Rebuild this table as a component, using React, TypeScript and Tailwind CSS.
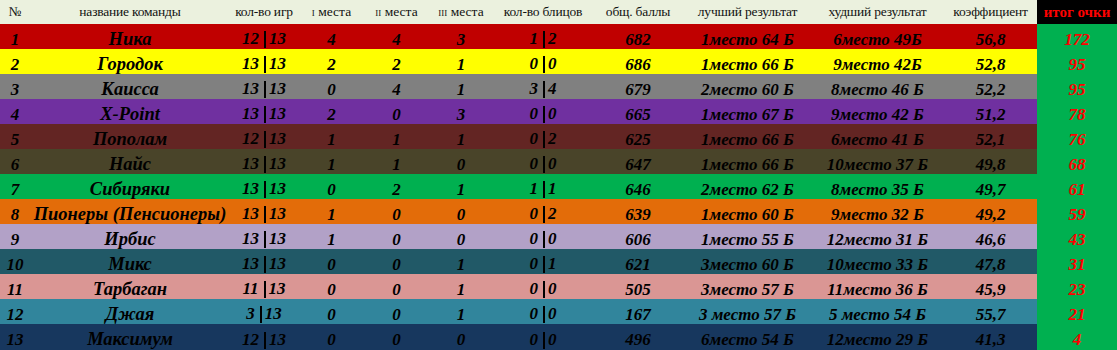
import React from "react";

type Row = {
  n: string;
  name: string;
  games: string;
  p1: string;
  p2: string;
  p3: string;
  blitz: string;
  total: string;
  best: string;
  worst: string;
  coef: string;
  score: string;
  bg: string;
};

const rows: Row[] = [
  { n: "1", name: "Ника", games: "12|13", p1: "4", p2: "4", p3: "3", blitz: "1|2", total: "682", best: "1место 64 Б", worst: "6место 49Б", coef: "56,8", score: "172", bg: "bg-[#c00000]" },
  { n: "2", name: "Городок", games: "13|13", p1: "2", p2: "2", p3: "1", blitz: "0|0", total: "686", best: "1место 66 Б", worst: "9место 42Б", coef: "52,8", score: "95", bg: "bg-[#ffff00]" },
  { n: "3", name: "Каисса", games: "13|13", p1: "0", p2: "4", p3: "1", blitz: "3|4", total: "679", best: "2место 60 Б", worst: "8место 46 Б", coef: "52,2", score: "95", bg: "bg-[#808080]" },
  { n: "4", name: "X-Point", games: "13|13", p1: "2", p2: "0", p3: "3", blitz: "0|0", total: "665", best: "1место 67 Б", worst: "9место 42 Б", coef: "51,2", score: "78", bg: "bg-[#7030a0]" },
  { n: "5", name: "Пополам", games: "12|13", p1: "1", p2: "1", p3: "1", blitz: "0|2", total: "625", best: "1место 66 Б", worst: "6место 41 Б", coef: "52,1", score: "76", bg: "bg-[#632523]" },
  { n: "6", name: "Найс", games: "13|13", p1: "1", p2: "1", p3: "0", blitz: "0|0", total: "647", best: "1место 66 Б", worst: "10место 37 Б", coef: "49,8", score: "68", bg: "bg-[#494429]" },
  { n: "7", name: "Сибиряки", games: "13|13", p1: "0", p2: "2", p3: "1", blitz: "1|1", total: "646", best: "2место 62 Б", worst: "8место 35 Б", coef: "49,7", score: "61", bg: "bg-[#00b050]" },
  { n: "8", name: "Пионеры (Пенсионеры)", games: "13|13", p1: "1", p2: "0", p3: "0", blitz: "0|2", total: "639", best: "1место 60 Б", worst: "9место 32 Б", coef: "49,2", score: "59", bg: "bg-[#e36c09]" },
  { n: "9", name: "Ирбис", games: "13|13", p1: "1", p2: "0", p3: "0", blitz: "0|0", total: "606", best: "1место 55 Б", worst: "12место 31 Б", coef: "46,6", score: "43", bg: "bg-[#b2a1c7]" },
  { n: "10", name: "Микс", games: "13|13", p1: "0", p2: "0", p3: "1", blitz: "0|1", total: "621", best: "3место 60 Б", worst: "10место 33 Б", coef: "47,8", score: "31", bg: "bg-[#215967]" },
  { n: "11", name: "Тарбаган", games: "11|13", p1: "0", p2: "0", p3: "1", blitz: "0|0", total: "505", best: "3место 57 Б", worst: "11место 36 Б", coef: "45,9", score: "23", bg: "bg-[#da9694]" },
  { n: "12", name: "Джая", games: "3|13", p1: "0", p2: "0", p3: "1", blitz: "0|0", total: "167", best: "3 место 57 Б", worst: "5 место 54 Б", coef: "55,7", score: "21", bg: "bg-[#31859c]" },
  { n: "13", name: "Максимум", games: "12|13", p1: "0", p2: "0", p3: "0", blitz: "0|0", total: "496", best: "6место 54 Б", worst: "12место 29 Б", coef: "41,3", score: "4", bg: "bg-[#17375e]" },
];

const grid =
  "grid grid-cols-[30px_200px_68px_67px_63px_66px_98px_92px_127px_133px_93px_80px]";

const cell = "flex items-center justify-center whitespace-nowrap pt-[5px]";

function Split({ v }: { v: string }) {
  const [a, b] = v.split("|");
  return (
    <span className="whitespace-pre">
      {a}
      <span className="inline-block w-[2px] h-[17px] bg-black ml-[5px] mr-[3px] align-[-4px]" />
      {b}
    </span>
  );
}

export default function App() {
  const headers = [
    "№",
    "название команды",
    "кол-во игр",
    null,
    null,
    null,
    "кол-во блицов",
    "общ. баллы",
    "лучший результат",
    "худший результат",
    "коэффициент",
  ];
  return (
    <div className="w-[1117px] h-[350px] overflow-hidden bg-white">
      <div
        className={`${grid} h-[24px] bg-[#ebf1de] text-[13.5px] text-[#111] items-center`}
        style={{ fontFamily: '"Liberation Serif", serif' }}
      >
        {headers.map((h, i) => {
          if (i === 3 || i === 4 || i === 5) {
            const r = i === 3 ? "i" : i === 4 ? "ii" : "iii";
            return (
              <div key={i} className="text-center whitespace-nowrap">
                <span className="[font-variant:small-caps]">{r}</span> места
              </div>
            );
          }
          return (
            <div key={i} className="text-center whitespace-nowrap tracking-[-0.2px]">
              {h}
            </div>
          );
        })}
        <div className="h-full bg-black flex items-center justify-center text-[#ff0000] font-bold text-[15px]">
          итог очки
        </div>
      </div>
      {rows.map((r, i) => (
        <div
          key={r.n}
          className={`${grid} ${i === rows.length - 1 ? "h-[26px]" : "h-[25px]"} ${r.bg} text-black font-bold italic text-[17px] leading-none`}
          style={{ fontFamily: '"Liberation Serif", serif' }}
        >
          <div className={cell}>{r.n}</div>
          <div className={`${cell} text-[18.5px]`}>{r.name}</div>
          <div className={cell}>
            <Split v={r.games} />
          </div>
          <div className={cell}>{r.p1}</div>
          <div className={cell}>{r.p2}</div>
          <div className={cell}>{r.p3}</div>
          <div className={cell}>
            <Split v={r.blitz} />
          </div>
          <div className={cell}>{r.total}</div>
          <div className={cell}>{r.best}</div>
          <div className={cell}>{r.worst}</div>
          <div className={cell}>{r.coef}</div>
          <div className={`${cell} bg-[#00b050] text-[#ff0000]`}>{r.score}</div>
        </div>
      ))}
    </div>
  );
}
